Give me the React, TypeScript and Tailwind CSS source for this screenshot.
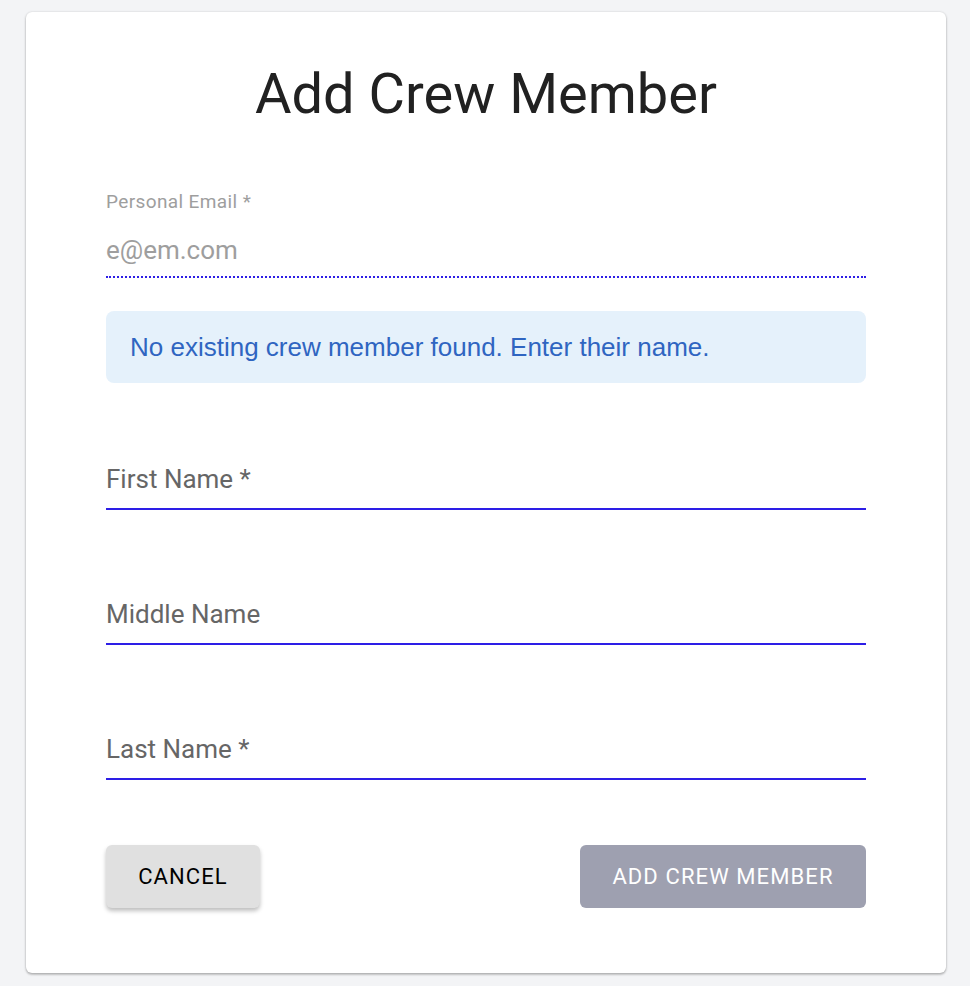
import React from "react";

const roboto = { fontFamily: "Roboto, 'Liberation Sans', sans-serif" };

function Field({ label, required }: { label: string; required?: boolean }) {
  return (
    <div className="h-[135px] flex flex-col justify-end">
      <div className="border-b-2 border-[#2d1ee6] pb-[13px]">
        <span className="text-[26px] leading-[30px] text-[#666666]">
          {label}
          {required ? " *" : ""}
        </span>
      </div>
    </div>
  );
}

export default function App() {
  return (
    <div className="min-h-[986px] bg-[#f3f4f6] pt-[12px] pb-[13px]" style={roboto}>
      <div className="mx-[26px] w-[920px] h-[961px] bg-white rounded-[6px] shadow-[0_1px_3px_rgba(0,0,0,0.2),0_2px_2px_rgba(0,0,0,0.12),0_0_2px_rgba(0,0,0,0.1)] px-[80px] pt-[49px]">
        <h1 className="text-center text-[56px] leading-[66px] text-[#212121] font-normal">
          Add Crew Member
        </h1>
        <div className="mt-[65px]">
          <div className="text-[19px] leading-[20px] tracking-[0.02em] text-[#9e9e9e]">Personal Email *</div>
          <div className="mt-[23px] pb-[11px] border-b-2 border-dotted border-[#2d1ee6] text-[26px] leading-[30px] text-[#9e9e9e]">
            e@em.com
          </div>
        </div>
        <div
          className="mt-[33px] h-[72px] rounded-[8px] bg-[#e5f1fb] flex items-center px-[24px] text-[26px] text-[#2f65c1]"
          style={{ fontFamily: "'Liberation Sans', Arial, sans-serif" }}
        >
          No existing crew member found. Enter their name.
        </div>
        <div className="-mt-[8px]">
          <Field label="First Name" required />
          <Field label="Middle Name" />
          <Field label="Last Name" required />
        </div>
        <div className="mt-[65px] flex justify-between">
          <button className="h-[63px] w-[154px] rounded-[6px] bg-[#e0e0e0] text-[22px] font-normal tracking-[0.05em] text-black shadow-[0_3px_4px_rgba(0,0,0,0.25)]">
            CANCEL
          </button>
          <button className="h-[63px] w-[286px] rounded-[6px] bg-[#9ea0b0] text-[22px] font-normal tracking-[0.05em] text-white">
            ADD CREW MEMBER
          </button>
        </div>
      </div>
    </div>
  );
}
